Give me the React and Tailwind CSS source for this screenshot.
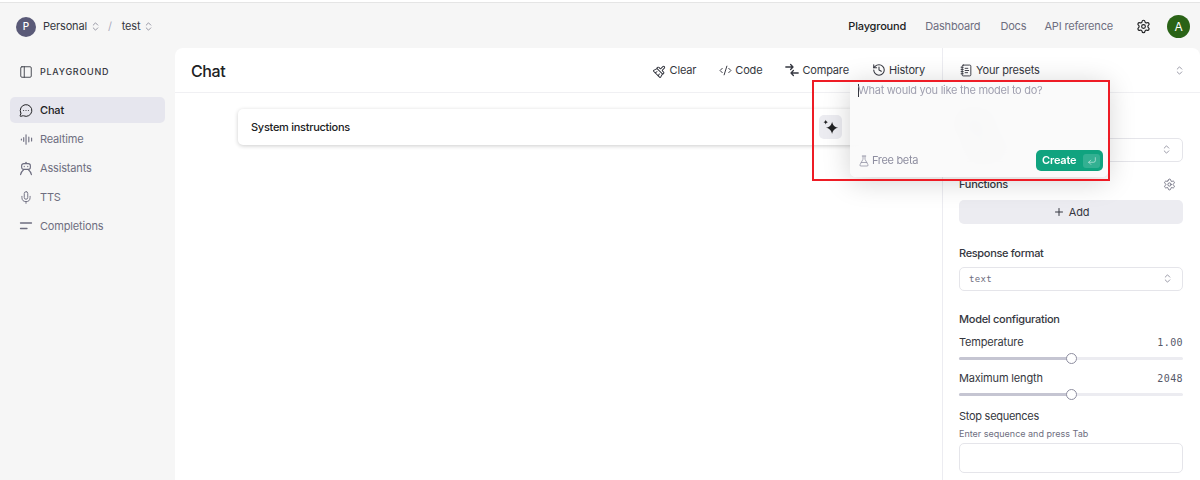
import React from 'react';
import { BrushCleaning, ChevronsUpDown, CodeXml, CornerDownLeft, FlaskConical, History, MessageCircleMore, Mic, NotebookText, PanelLeft, Plus, Settings } from 'lucide-react';

const Wave = () => (
  <svg width="13" height="13" viewBox="0 0 14 14" fill="none" stroke="currentColor" strokeWidth="1.2" strokeLinecap="round">
    <path d="M1.500 6.500v1M4 5v4M6.500 2v10M9.500 4.500v5M12.500 5.500v3" />
  </svg>
);

const Robot = () => (
  <svg width="15" height="15" viewBox="0 0 16 16" fill="none" stroke="currentColor" strokeWidth="1.3" strokeLinecap="round" strokeLinejoin="round">
    <path d="M8 .8v1.400" />
    <rect x="3" y="2.400" width="10" height="6.600" rx="2.400" />
    <path d="M6 5.600v.2M10 5.600v.2M1.800 15c.5-2.800 2-4.400 3.400-5.600M14.200 15c-.5-2.800-2-4.400-3.400-5.600" />
  </svg>
);

const Lines = () => (
  <svg width="14" height="14" viewBox="0 0 14 14" fill="none" stroke="currentColor" strokeWidth="1.3" strokeLinecap="round">
    <path d="M1.500 4h11M1.500 9.500h6.500" />
  </svg>
);

const CompareArrows = () => (
  <svg width="14" height="14" viewBox="0 0 14 14" fill="none" stroke="currentColor" strokeWidth="1.3" strokeLinecap="round" strokeLinejoin="round">
    <path d="M.8 4h7M5.600 1.500L8 4 5.600 6.500M13.200 10h-7M8.400 7.500L6 10l2.400 2.500" />
  </svg>
);

const Sparkle = () => (
  <svg width="17" height="17" viewBox="0 0 16 16" fill="#202123">
    <path d="M9.500 2.500c.7 3.200 2.100 5 5.800 5.800-3.700.8-5.100 2.600-5.800 5.800-.7-3.200-2.100-5-5.800-5.800 3.700-.8 5.100-2.600 5.800-5.800z" />
    <path d="M3.500.8c.2 1.200.8 1.900 2.100 2.200-1.300.3-1.900 1-2.100 2.200-.2-1.200-.8-1.900-2.100-2.200 1.300-.3 1.900-1 2.100-2.200z" />
  </svg>
);

const navItems = [
  { label: 'Chat', icon: <MessageCircleMore size={15} strokeWidth={1.7} />, active: true },
  { label: 'Realtime', icon: <Wave /> },
  { label: 'Assistants', icon: <Robot /> },
  { label: 'TTS', icon: <Mic size={15} strokeWidth={1.6} /> },
  { label: 'Completions', icon: <Lines /> },
];

const tools = [
  { label: 'Clear', icon: <BrushCleaning size={13} strokeWidth={1.8} className="rotate-45" /> },
  { label: 'Code', icon: <CodeXml size={13} strokeWidth={1.8} /> },
  { label: 'Compare', icon: <CompareArrows /> },
  { label: 'History', icon: <History size={14} strokeWidth={1.8} /> },
];

const Slider = ({ label, value }) => (
  <div>
    <div className="flex justify-between items-center h-4 text-[#353740]">
      <span>{label}</span>
      <span className="font-['DejaVu_Sans_Mono',monospace] text-[10px] tracking-[0.04em] text-[#565869]">{value}</span>
    </div>
    <div className="relative mt-[6px] h-[3px] rounded-full bg-[#ececf1] mb-[5px]">
      <div className="h-full w-1/2 rounded-full bg-[#c5c5d2]" />
      <div className="absolute left-1/2 -top-[4px] -ml-[5px] h-[11px] w-[11px] rounded-full border border-[#8e8ea0] bg-white" />
    </div>
  </div>
);

export default function App() {
  return (
    <div className="relative h-[480px] w-[1200px] overflow-hidden bg-[#f6f6f6] font-['Inter',sans-serif] text-[11px] tracking-[-0.015em] text-[#353740]">
      <div className="h-[3px] bg-white border-b border-[#e5e5e5]" />

      <header className="flex h-[45px] items-center justify-between pl-4 pr-[10px] pt-[2px]">
        <div className="flex items-center">
          <div className="flex h-[20px] w-[20px] items-center justify-center rounded-full bg-[#5a5a78] text-[10px] font-medium text-white">P</div>
          <span className="ml-[7px]">Personal</span>
          <ChevronsUpDown size={11} strokeWidth={1.5} className="ml-[3px] text-[#6e6e80]" />
          <span className="ml-[7px] text-[#acacbe]">/</span>
          <span className="ml-[10px]">test</span>
          <ChevronsUpDown size={11} strokeWidth={1.5} className="ml-[3px] text-[#6e6e80]" />
        </div>
        <div className="flex items-center">
          <span className="font-medium text-[#202123]">Playground</span>
          <span className="ml-[19px] text-[#6e6e80]">Dashboard</span>
          <span className="ml-[20px] text-[#6e6e80]">Docs</span>
          <span className="ml-[18px] text-[#6e6e80]">API reference</span>
          <span className="ml-[23px] text-[#202123]"><Settings size={15} strokeWidth={1.8} /></span>
          <div className="ml-[16px] flex h-[23px] w-[23px] items-center justify-center rounded-full bg-[#2a6317] text-[12px] text-white">A</div>
        </div>
      </header>

      <div className="flex h-[432px]">
        <aside className="w-[175px] shrink-0 px-[10px] pt-[12px]">
          <div className="flex h-[24px] items-center gap-[7px] pl-[9px] text-[9px] font-medium tracking-[0.08em] text-[#353740]">
            <PanelLeft size={14} strokeWidth={1.5} />
            PLAYGROUND
          </div>
          <nav className="mt-[13px] flex flex-col gap-[3px]">
            {navItems.map((item) => (
              <div
                key={item.label}
                className={`flex h-[26px] items-center gap-[7px] rounded-[5px] pl-[9px] ${item.active ? 'bg-[#e6e6ee] font-medium text-[#202123]' : 'text-[#6e6e80]'}`}
              >
                <span className="flex w-[14px] justify-center">{item.icon}</span>
                {item.label}
              </div>
            ))}
          </nav>
        </aside>

        <main className="flex min-w-0 flex-1 rounded-t-lg bg-white">
          <div className="w-[767px] shrink-0">
            <div className="flex h-[45px] items-center justify-between border-b border-[#f0f0f3] pl-4 pr-[17px]">
              <h1 className="pt-[2px] text-[16px] font-medium tracking-[-0.025em] text-[#202123]">Chat</h1>
              <div className="flex items-center gap-[23px]">
                {tools.map((tool) => (
                  <span key={tool.label} className="flex items-center gap-[3px]">
                    {tool.icon}
                    {tool.label}
                  </span>
                ))}
              </div>
            </div>
            <div className="pl-[63px] pt-[16px]">
              <div className="flex h-[36px] w-[640px] items-center justify-between rounded-[5px] bg-white pl-[13px] pr-[36px] font-medium tracking-[-0.025em] text-[#202123] shadow-[0_1px_4px_rgba(0,0,0,0.2)]">
                System instructions
                <div className="flex h-[24px] w-[23px] items-center justify-center rounded-[5px] bg-[#ececf1]"><Sparkle /></div>
              </div>
            </div>
          </div>

          <section className="flex-1 border-l border-[#ececf1]">
            <div className="flex h-[45px] items-center justify-between border-b border-[#f0f0f3] pl-[17px] pr-[15px]">
              <span className="flex items-center gap-[3px]">
                <NotebookText size={13} strokeWidth={1.7} />
                Your presets
              </span>
              <ChevronsUpDown size={11} strokeWidth={1.5} className="text-[#6e6e80]" />
            </div>
            <div className="w-[256px] px-[16px] pt-[21px]">
              <div className="font-medium">Model</div>
              <div className="mt-[7px] flex h-[24px] items-center justify-between rounded-[5px] border border-[#e5e5ea] px-[10px]">
                <span>gpt-4o</span>
                <ChevronsUpDown size={11} strokeWidth={1.5} className="text-[#6e6e80]" />
              </div>
              <div className="mt-[15px] flex h-[16px] items-center justify-between font-medium tracking-[-0.025em]">
                Functions
                <span className="mr-[7px] text-[#6e6e80]"><Settings size={13} strokeWidth={1.7} /></span>
              </div>
              <button className="mt-[7px] flex h-[24px] w-full items-center justify-center gap-[4px] rounded-[5px] bg-[#ececf1] pt-px">
                <Plus size={12} />
                Add
              </button>
              <div className="mt-[22px] flex h-[16px] items-center font-medium tracking-[-0.03em]">Response format</div>
              <div className="mt-[5px] flex h-[24px] items-center justify-between rounded-[5px] border border-[#e5e5ea] px-[9px]">
                <span className="pt-[2px] font-['DejaVu_Sans_Mono',monospace] text-[9px] tracking-[0.04em] text-[#6e6e80]">text</span>
                <ChevronsUpDown size={11} strokeWidth={1.5} className="text-[#6e6e80]" />
              </div>
              <div className="mt-[21px] flex h-[16px] items-center font-medium tracking-[-0.025em]">Model configuration</div>
              <div className="mt-[7px] flex flex-col gap-[6px]">
                <Slider label="Temperature" value="1.00" />
                <Slider label="Maximum length" value="2048" />
              </div>
              <div className="mt-[8px] flex h-[16px] items-center tracking-[-0.025em]">Stop sequences</div>
              <div className="mt-[3px] text-[9px] leading-[12px] tracking-normal text-[#6e6e80]">Enter sequence and press Tab</div>
              <div className="mt-[3px] h-[30px] rounded-[5px] border border-[#e5e5ea]" />
            </div>
          </section>
        </main>
      </div>

      {/* popup floats over the panels */}
      <div className="absolute left-[850px] top-[80px] flex h-[97px] w-[258px] flex-col justify-between rounded-b-[6px] bg-[#fafafa]/90 pl-[8px] pr-[5px] pb-[6px] shadow-[0_4px_28px_rgba(0,0,0,0.18)] backdrop-blur-md">
        <div className="mt-[3px] flex h-[14px] items-center tracking-[-0.025em] text-[#a0a0b0]">
          <span className="mr-[-1px] h-[13px] w-px bg-[#353740]" />
          What would you like the model to do?
        </div>
        <div className="flex items-center justify-between">
          <span className="flex items-center gap-[2px] tracking-[-0.03em] text-[#8e8ea0]">
            <FlaskConical size={12} strokeWidth={1.5} />
            Free beta
          </span>
          <button className="flex h-[21px] w-[67px] items-center justify-between rounded-[5px] bg-[#10a37f] pl-[6px] pr-[3px] font-semibold text-white">
            Create
            <span className="flex h-[14px] w-[17px] items-center justify-center rounded-[3px] bg-white/15 text-white/60"><CornerDownLeft size={10} /></span>
          </button>
        </div>
      </div>

      {/* annotation box from the screenshot */}
      <div className="pointer-events-none absolute left-[812px] top-[80px] h-[101px] w-[298px] border-2 border-[#ee1c25]" />
    </div>
  );
}
